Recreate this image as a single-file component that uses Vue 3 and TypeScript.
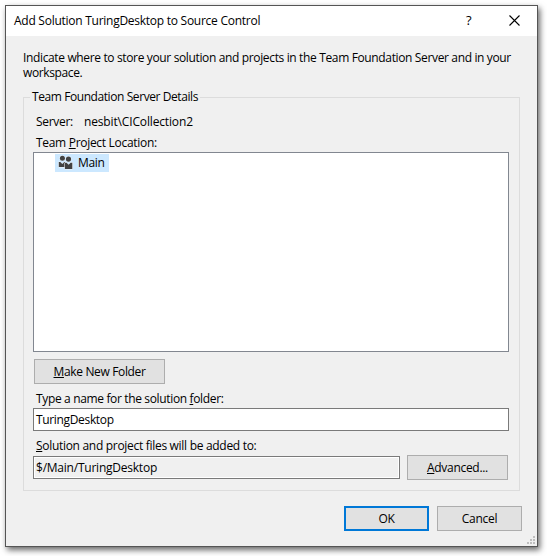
<script setup lang="ts">
import { ref } from 'vue'

const folderName = ref('TuringDesktop')
const projects = ref(['Main'])
</script>

<template>
  <main class="stage">
    <section class="dialog" role="dialog">
      <header class="titlebar">
        <span class="title">Add Solution TuringDesktop to Source Control</span>
        <span class="help">?</span>
        <svg class="close" width="11" height="11" viewBox="0 0 11 11">
          <path d="M.5.5 10.5 10.5M10.5.5.5 10.5" stroke="#000" stroke-width="1.1" fill="none" />
        </svg>
      </header>
      <div class="content">
        <div class="intro">
          <div class="intro-first">Indicate where to store your solution and projects in the Team Foundation Server and in your</div>
          <div class="intro-second">workspace.</div>
        </div>
        <div class="group">
          <div class="legend"><span>Team Foundation Server Details</span></div>
          <div class="server"><span class="server-key">Server:</span><span class="server-name">nesbit\CICollection2</span></div>
          <div class="label location"><span>Team <u>P</u>roject Location:</span></div>
          <div class="tree">
            <div v-for="project in projects" :key="project" class="node">
              <svg width="15" height="15" viewBox="0 0 15 15">
                <g fill="#424242" stroke="#f4f6f8" stroke-width="1" paint-order="stroke">
                  <circle cx="4.4" cy="3.3" r="2.5" />
                  <path d="M.8 7h1.5l2 2 2-2H7v5H.8z" />
                  <circle cx="10.5" cy="4.1" r="2.6" />
                  <path d="M6.9 7.8h1.7l2 2 2-2h1.7V14H6.9z" />
                </g>
              </svg>
              <span>{{ project }}</span>
            </div>
          </div>
          <button class="btn make"><span><u>M</u>ake New Folder</span></button>
          <div class="label name-label"><span>Type a name for the solution <u>f</u>older:</span></div>
          <div class="field"><span class="field-name">{{ folderName }}</span></div>
          <div class="label added-label"><span><u>S</u>olution and project files will be added to:</span></div>
          <div class="path-row">
            <div class="field readonly"><span class="field-path">$/Main/{{ folderName }}</span></div>
            <button class="btn advanced"><span><u>A</u>dvanced...</span></button>
          </div>
        </div>
        <footer class="actions">
          <button class="btn ok"><span>OK</span></button>
          <button class="btn cancel"><span>Cancel</span></button>
        </footer>
      </div>
      <svg class="grip" width="8" height="8" viewBox="0 0 8 8" fill="#bfbfbf">
        <path d="M6 0h2v2H6zM3 3h2v2H3zM6 3h2v2H6zM0 6h2v2H0zM3 6h2v2H3zM6 6h2v2H6z" />
      </svg>
    </section>
  </main>
</template>

<style>
body {
  background: #fff;
}
</style>

<style scoped>
* {
  box-sizing: border-box;
}
.stage {
  width: 547px;
  height: 556px;
  padding: 5px;
  overflow: hidden;
  background: #fff;
  font: 12px/15px "Open Sans", "Noto Sans", sans-serif;
  color: #000;
  white-space: nowrap;
  letter-spacing: -0.3px;
}
.dialog {
  position: relative;
  width: 533px;
  height: 542px;
  border: 1px solid #555;
  background: #f0f0f0;
  box-shadow: 2px 3px 6px rgba(0, 0, 0, 0.6);
}
.titlebar {
  display: flex;
  height: 30px;
  padding: 7px 17px 0 8px;
  background: #fff;
}
.title {
  flex: 1;
  letter-spacing: -0.26px;
}
.help {
  width: 8px;
  margin-right: 35px;
  font-size: 13px;
}
.close {
  margin-top: 2px;
}
.content {
  padding: 14px 15px 0 17px;
}
.intro {
  height: 47px;
}
.intro-first {
  letter-spacing: -0.357px;
}
.intro-second {
  letter-spacing: -0.38px;
}
.group {
  width: 497px;
  height: 394px;
  padding: 0 10px 0 9px;
  border: 1px solid #dcdcdc;
}
.legend {
  width: 170px;
  height: 15px;
  margin: -9px 0 0 -3px;
  padding-left: 2px;
  background: #f0f0f0;
  letter-spacing: -0.42px;
}
.server {
  display: flex;
  height: 20px;
  margin-top: 10px;
  padding-left: 3px;
}
.server-key {
  width: 48px;
}
.server-name {
  letter-spacing: -0.15px;
}
.label {
  padding-left: 3px;
}
.location {
  height: 17px;
  margin-top: 1px;
}
u {
  text-decoration: underline;
  text-decoration-thickness: 1px;
  text-underline-offset: 1px;
}
.tree {
  height: 200px;
  padding: 1px 0 0 21px;
  border: 1px solid #828790;
  background: #fff;
}
.node {
  display: flex;
  width: 54px;
  height: 18px;
  padding: 1px 0 0 3px;
  gap: 5px;
  background: #cce8ff;
}
.btn {
  display: flex;
  align-items: center;
  justify-content: center;
  height: 25px;
  margin: 0;
  padding: 0;
  border: 1px solid #adadad;
  background: #e1e1e1;
  color: #000;
  font: inherit;
  letter-spacing: inherit;
}
.make {
  width: 131px;
  margin: 7px 0 0 1px;
  letter-spacing: -0.35px;
}
.name-label {
  height: 17px;
  margin-top: 7px;
  letter-spacing: -0.35px;
}
.field {
  height: 23px;
  padding: 3px 2px 0;
  border: 1px solid #7a7a7a;
  background: #fff;
}
.field-name {
  letter-spacing: -0.34px;
}
.field-path {
  letter-spacing: -0.23px;
}
.added-label {
  height: 17px;
  margin-top: 7px;
}
.path-row {
  display: flex;
  height: 25px;
}
.readonly {
  width: 367px;
  margin: 1px 7px 0 0;
  background: #f0f0f0;
  box-shadow: inset 0 0 0 1px #fff;
}
.advanced {
  width: 101px;
}
.actions {
  display: flex;
  justify-content: flex-end;
  gap: 8px;
  margin-top: 15px;
}
.ok,
.cancel {
  width: 85px;
}
.ok {
  border: 2px solid #0078d7;
}
.grip {
  position: absolute;
  right: 2px;
  bottom: 2px;
}
</style>
